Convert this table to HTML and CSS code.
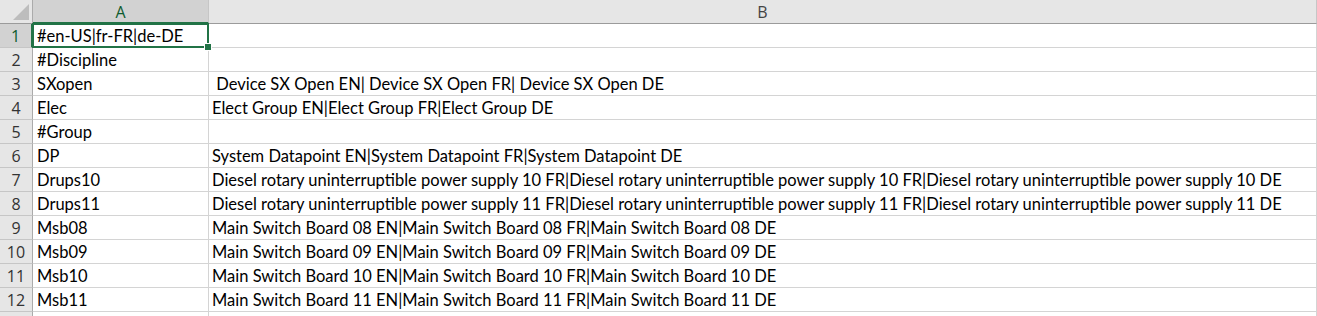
FILE: index.html
```html
<!DOCTYPE html>
<html>
<head>
<meta charset="utf-8">
<link rel="stylesheet" href="styles.css">
</head>
<body>
<div class="sheet">
  <div class="corner"><svg class="tri" width="16" height="16" viewBox="0 0 16 16"><polygon points="16,0 16,16 0,16" fill="#bdbdbd"/></svg></div>
  <div class="colhead sel">A</div>
  <div class="colhead">B</div>

  <div class="rowhead sel">1</div>
  <div class="cell a active">#en-US|fr-FR|de-DE<span class="selbox"><span class="handle"></span></span></div>
  <div class="cell b"></div>

  <div class="rowhead">2</div>
  <div class="cell a">#Discipline</div>
  <div class="cell b"></div>

  <div class="rowhead">3</div>
  <div class="cell a">SXopen</div>
  <div class="cell b"> Device SX Open EN| Device SX Open FR| Device SX Open DE</div>

  <div class="rowhead">4</div>
  <div class="cell a">Elec</div>
  <div class="cell b">Elect Group EN|Elect Group FR|Elect Group DE</div>

  <div class="rowhead">5</div>
  <div class="cell a">#Group</div>
  <div class="cell b"></div>

  <div class="rowhead">6</div>
  <div class="cell a">DP</div>
  <div class="cell b">System Datapoint EN|System Datapoint FR|System Datapoint DE</div>

  <div class="rowhead">7</div>
  <div class="cell a">Drups10</div>
  <div class="cell b">Diesel rotary uninterruptible power supply 10 FR|Diesel rotary uninterruptible power supply 10 FR|Diesel rotary uninterruptible power supply 10 DE</div>

  <div class="rowhead">8</div>
  <div class="cell a">Drups11</div>
  <div class="cell b">Diesel rotary uninterruptible power supply 11 FR|Diesel rotary uninterruptible power supply 11 FR|Diesel rotary uninterruptible power supply 11 DE</div>

  <div class="rowhead">9</div>
  <div class="cell a">Msb08</div>
  <div class="cell b">Main Switch Board 08 EN|Main Switch Board 08 FR|Main Switch Board 08 DE</div>

  <div class="rowhead">10</div>
  <div class="cell a">Msb09</div>
  <div class="cell b">Main Switch Board 09 EN|Main Switch Board 09 FR|Main Switch Board 09 DE</div>

  <div class="rowhead">11</div>
  <div class="cell a">Msb10</div>
  <div class="cell b">Main Switch Board 10 EN|Main Switch Board 10 FR|Main Switch Board 10 DE</div>

  <div class="rowhead">12</div>
  <div class="cell a">Msb11</div>
  <div class="cell b">Main Switch Board 11 EN|Main Switch Board 11 FR|Main Switch Board 11 DE</div>

  <div class="rowhead"></div>
  <div class="cell a"></div>
  <div class="cell b"></div>
</div>
</body>
</html>
```
FILE: styles.css
```css
html, body {
  margin: 0;
  padding: 0;
  background: #ffffff;
  overflow: hidden;
}
.sheet {
  display: grid;
  grid-template-columns: 33px 176px 1108px;
  grid-template-rows: 24px;
  grid-auto-rows: 24px;
  font-family: Lato, "Open Sans", sans-serif;
}
.corner {
  background: #e6e6e6;
  border-right: 1px solid #ababab;
  border-bottom: 1px solid #9b9b9b;
  box-sizing: border-box;
  display: flex;
  align-items: flex-end;
  justify-content: flex-end;
  padding: 0 3px 3px 0;
}
.tri { display: block; }
.colhead {
  background: #e6e6e6;
  border-right: 1px solid #c6c6c6;
  border-bottom: 1px solid #9b9b9b;
  box-sizing: border-box;
  display: flex;
  align-items: center;
  justify-content: center;
  font-family: "Open Sans", sans-serif;
  font-size: 16px;
  color: #444444;
}
.colhead.sel {
  background: #d2d2d2;
  border-bottom: 2px solid #217346;
  color: #0e5c2f;
  padding-top: 1px;
}
.rowhead {
  background: #e6e6e6;
  border-right: 1px solid #ababab;
  border-bottom: 1px solid #c6c6c6;
  box-sizing: border-box;
  display: flex;
  align-items: center;
  justify-content: center;
  font-family: "Open Sans", sans-serif;
  font-size: 16px;
  color: #333333;
}
.rowhead.sel {
  background: #d2d2d2;
  border-right: 2px solid #217346;
  color: #0e5c2f;
}
.cell {
  border-right: 1px solid #d4d4d4;
  border-bottom: 1px solid #d4d4d4;
  box-sizing: border-box;
  display: flex;
  align-items: center;
  padding: 1px 0 0 3px;
  font-size: 16.5px;
  color: #000000;
  white-space: pre;
  overflow: visible;
  min-width: 0;
}
.cell.a { padding-left: 4px; }
.cell.active { position: relative; }
.selbox {
  position: absolute;
  left: -1px;
  top: -1px;
  right: -1px;
  bottom: -1px;
  border: 2px solid #217346;
}
.handle {
  position: absolute;
  right: -5px;
  bottom: -5px;
  width: 6px;
  height: 6px;
  background: #217346;
  border: 1px solid #ffffff;
}
```
